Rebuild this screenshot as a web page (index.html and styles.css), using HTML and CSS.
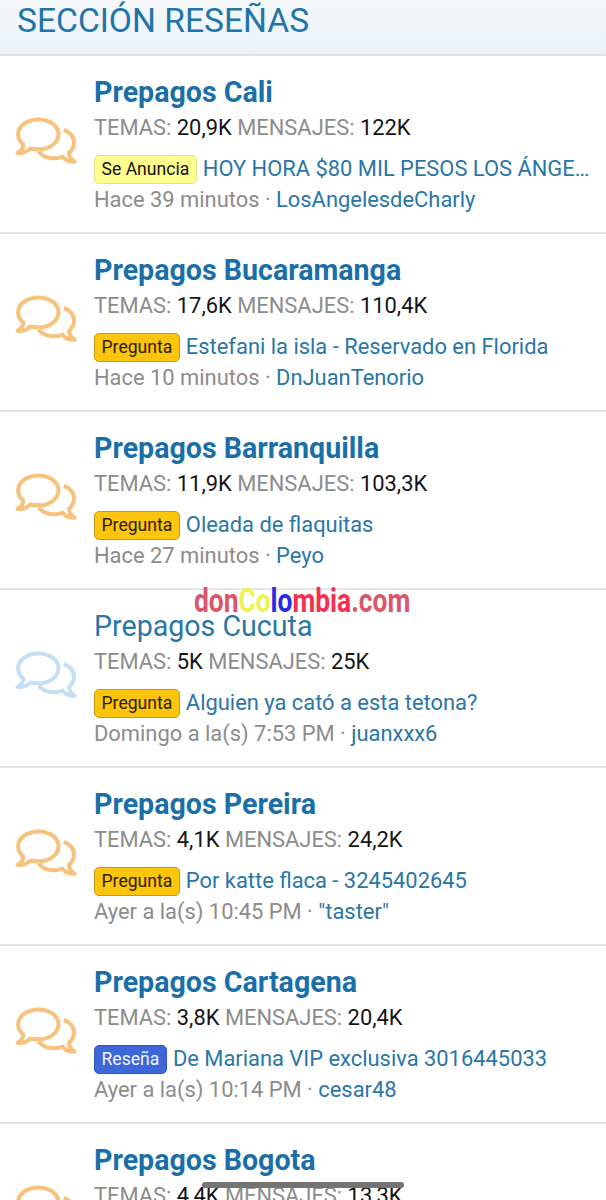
FILE: index.html
```html
<!DOCTYPE html>
<html lang="es">
<head>
<meta charset="utf-8">
<title>Sección Reseñas</title>
<link rel="stylesheet" href="styles.css">
</head>
<body>
<svg class="defs" width="0" height="0" aria-hidden="true">
  <symbol id="bubbles" viewBox="0 0 64 50">
    <path d="M50.5 13.500c6 1.600 10.600 6.800 10.600 13 0 4.300-1.900 8-5 10.800 0 4 2 7 5.700 9.200-4.800.4-9.600-1-12.700-5.300-3.800 1.800-9 2.200-14 1.200-4.500-.9-8-2.800-10.800-6.400"/>
    <path d="M24 2.500C12.700 2.500 3 9.200 3 18c0 4.300 2.100 8 5.400 10.800 0 3.200-2 5.900-5.900 8.700 5.500.2 10.200-1.300 13-4.700 2.400.6 5.400.9 8.500.9 11.500 0 21-6.700 21-15.700S35.500 2.500 24 2.500z"/>
  </symbol>
</svg>
<main class="page">
  <h2 class="section-head">SECCIÓN RESEÑAS</h2>

  <article class="forum">
    <svg class="forum-icon"><use href="#bubbles"/></svg>
    <div class="forum-body">
      <h3 class="forum-title">Prepagos Cali</h3>
      <p class="stats"><span class="label">TEMAS:</span> 20,9K <span class="label">MENSAJES:</span> 122K</p>
      <p class="thread"><span class="tag tag-yellow">Se Anuncia</span><a class="thread-link">HOY HORA $80 MIL PESOS LOS ÁNGELES VIP CALI</a></p>
      <p class="meta">Hace 39 minutos · <a class="user">LosAngelesdeCharly</a></p>
    </div>
  </article>

  <article class="forum">
    <svg class="forum-icon"><use href="#bubbles"/></svg>
    <div class="forum-body">
      <h3 class="forum-title">Prepagos Bucaramanga</h3>
      <p class="stats"><span class="label">TEMAS:</span> 17,6K <span class="label">MENSAJES:</span> 110,4K</p>
      <p class="thread"><span class="tag tag-amber">Pregunta</span><a class="thread-link">Estefani la isla - Reservado en Florida</a></p>
      <p class="meta">Hace 10 minutos · <a class="user">DnJuanTenorio</a></p>
    </div>
  </article>

  <article class="forum">
    <svg class="forum-icon"><use href="#bubbles"/></svg>
    <div class="forum-body">
      <h3 class="forum-title">Prepagos Barranquilla</h3>
      <p class="stats"><span class="label">TEMAS:</span> 11,9K <span class="label">MENSAJES:</span> 103,3K</p>
      <p class="thread"><span class="tag tag-amber">Pregunta</span><a class="thread-link">Oleada de flaquitas</a></p>
      <p class="meta">Hace 27 minutos · <a class="user">Peyo</a></p>
    </div>
  </article>

  <article class="forum forum-read">
    <svg class="forum-icon"><use href="#bubbles"/></svg>
    <div class="forum-body">
      <h3 class="forum-title">Prepagos Cucuta</h3>
      <p class="stats"><span class="label">TEMAS:</span> 5K <span class="label">MENSAJES:</span> 25K</p>
      <p class="thread"><span class="tag tag-amber">Pregunta</span><a class="thread-link">Alguien ya cató a esta tetona?</a></p>
      <p class="meta">Domingo a la(s) 7:53 PM · <a class="user">juanxxx6</a></p>
    </div>
  </article>

  <article class="forum">
    <svg class="forum-icon"><use href="#bubbles"/></svg>
    <div class="forum-body">
      <h3 class="forum-title">Prepagos Pereira</h3>
      <p class="stats"><span class="label">TEMAS:</span> 4,1K <span class="label">MENSAJES:</span> 24,2K</p>
      <p class="thread"><span class="tag tag-amber">Pregunta</span><a class="thread-link">Por katte flaca - 3245402645</a></p>
      <p class="meta">Ayer a la(s) 10:45 PM · <a class="user">"taster"</a></p>
    </div>
  </article>

  <article class="forum">
    <svg class="forum-icon"><use href="#bubbles"/></svg>
    <div class="forum-body">
      <h3 class="forum-title">Prepagos Cartagena</h3>
      <p class="stats"><span class="label">TEMAS:</span> 3,8K <span class="label">MENSAJES:</span> 20,4K</p>
      <p class="thread"><span class="tag tag-blue">Reseña</span><a class="thread-link">De Mariana VIP exclusiva 3016445033</a></p>
      <p class="meta">Ayer a la(s) 10:14 PM · <a class="user">cesar48</a></p>
    </div>
  </article>

  <article class="forum">
    <svg class="forum-icon"><use href="#bubbles"/></svg>
    <div class="forum-body">
      <h3 class="forum-title">Prepagos Bogota</h3>
      <p class="stats"><span class="label">TEMAS:</span> 4,4K <span class="label">MENSAJES:</span> 13,3K</p>
    </div>
  </article>
</main>
<div class="watermark"><span class="wm-rose">don</span><span class="wm-yellow">Co</span><span class="wm-blue">lo</span><span class="wm-red">mbia</span><span class="wm-rose">.com</span></div>
<div class="home-bar"></div>
</body>
</html>
```

FILE: styles.css
```css
* { box-sizing: border-box; }
html, body { margin: 0; height: 1200px; overflow: hidden; background: #fff; }
body { position: relative; font-family: Roboto, "Liberation Sans", sans-serif; color: #141414; }
.defs { position: absolute; }
p, h2, h3 { margin: 0; font-weight: 400; }

.section-head {
  height: 56px;
  padding: 2px 0 0 17px;
  font-size: 33.6px;
  line-height: 38px;
  color: #1f74a8;
  background: linear-gradient(#f5f7f9, #e9f3fb);
  border-bottom: 2px solid #dfe3e6;
}

.forum {
  display: flex;
  height: 178px;
  padding-top: 18px;
  border-bottom: 2px solid #e6e6e6;
}
.forum-icon {
  flex: none;
  width: 62px;
  height: 48px;
  margin: 43px 17px 0 15px;
  fill: none;
  stroke: #f6c27e;
  stroke-width: 4.2;
  stroke-linejoin: round;
}
.forum-read .forum-icon { stroke: #c5e0f5; }
.forum-body { flex: 1; min-width: 0; padding-right: 16px; }

.forum-title {
  font-size: 28.6px;
  line-height: 36px;
  font-weight: 700;
  color: #1b6fa8;
}
.forum-read .forum-title { font-weight: 400; color: #2a76a6; }

.stats { font-size: 21.9px; line-height: 36px; white-space: nowrap; }
.label { color: #8c8c8c; }

.thread {
  display: flex;
  align-items: center;
  gap: 6px;
  height: 30px;
  margin-top: 8px;
  font-size: 21.9px;
  line-height: 28px;
  white-space: nowrap;
}
.thread-link {
  flex: 1;
  min-width: 0;
  overflow: hidden;
  text-overflow: ellipsis;
  color: #2a76a6;
}
.tag {
  flex: none;
  height: 29px;
  margin-top: 1px;
  padding: 0 6.5px;
  font-size: 17.6px;
  line-height: 27px;
  border: 1px solid;
  border-radius: 5px;
}
.tag-yellow { background: #ffff8f; border-color: #e3e38a; color: #111; }
.tag-amber { background: #fdc50c; border-color: #c79a12; color: #2b2004; }
.tag-blue { background: #3d66d8; border-color: #3257bd; color: #f2f5fd; }

.meta { margin-top: 1px; font-size: 21.9px; line-height: 30px; color: #8c8c8c; white-space: nowrap; }
.user { color: #2a76a6; }

.watermark {
  position: absolute;
  left: 194px;
  top: 581px;
  font-size: 34px;
  line-height: 38px;
  font-weight: 700;
  white-space: nowrap;
  transform: scaleX(0.775);
  transform-origin: left top;
}
.wm-rose { color: #d9566c; }
.wm-yellow { color: #eef24e; }
.wm-blue { color: #2b2be6; }
.wm-red { color: #f5304e; }

.home-bar {
  position: absolute;
  left: 202px;
  top: 1182px;
  width: 202px;
  height: 6px;
  border-radius: 3px;
  background: #747474;
}
```
